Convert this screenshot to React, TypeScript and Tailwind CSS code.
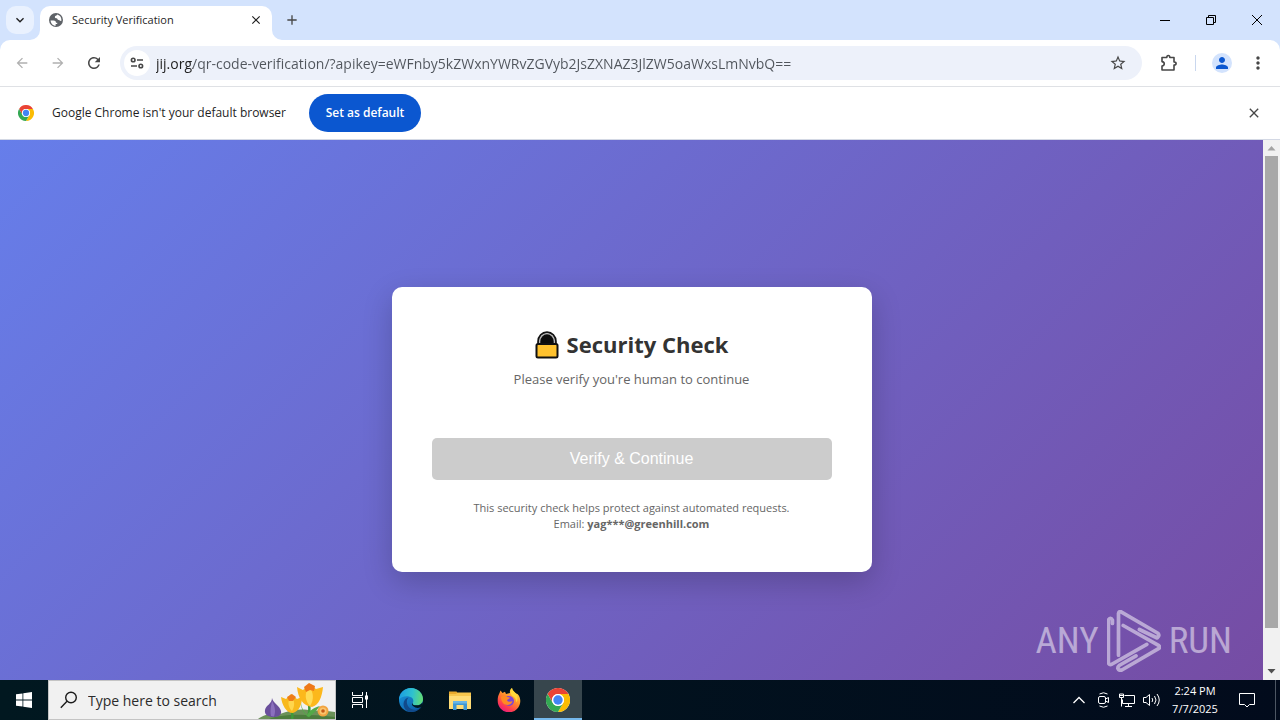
import React from 'react';
import {
  MdArrowBack,
  MdArrowForward,
  MdRefresh,
  MdClose,
  MdAdd,
  MdStarOutline,
  MdMoreVert,
  MdPerson,
  MdKeyboardArrowDown,
} from 'react-icons/md';

const ChromeLogo = ({ className }: { className?: string }) => (
  <svg viewBox="0 0 48 48" className={className} aria-hidden="true">
    <circle cx="24" cy="24" r="24" fill="#fff" />
    <path d="M3.2 12A24 24 0 0 1 44.8 12H24a12 12 0 0 0-10.4 18z" fill="#ea4335" />
    <path d="M44.8 12A24 24 0 0 1 24 48l10.4-18A12 12 0 0 0 24 12z" fill="#fbbc04" />
    <path d="M24 48A24 24 0 0 1 3.2 12l10.4 18A12 12 0 0 0 34.4 30z" fill="#34a853" />
    <circle cx="24" cy="24" r="12" fill="#fff" />
    <circle cx="24" cy="24" r="9.4" fill="#4285f4" />
  </svg>
);

const EdgeLogo = () => (
  <svg viewBox="0 0 24 24" className="h-6 w-6" aria-hidden="true">
    <defs>
      <linearGradient id="edgeTop" x1="0" y1="0.4" x2="1" y2="0.5">
        <stop offset="0" stopColor="#1b9de2" />
        <stop offset="0.55" stopColor="#2fc1cf" />
        <stop offset="1" stopColor="#63dc72" />
      </linearGradient>
      <linearGradient id="edgeSide" x1="0" y1="0" x2="0.8" y2="1">
        <stop offset="0" stopColor="#1b9de2" />
        <stop offset="1" stopColor="#0c59a4" />
      </linearGradient>
    </defs>
    <circle cx="12" cy="12" r="12" fill="url(#edgeSide)" />
    <path d="M0 12C0 5 5.500 0 12 0s12 5 12 11c0 4-3 6.300-6.500 6.300-3 0-4.500-1.200-3.700-2.400 1.300-1.800.6-5.900-4-6.500C5 7.800 1 9.500 0 12z" fill="url(#edgeTop)" />
    <path d="M9.500 9.500C6.500 12 7 20.500 15 21.800c3 .4 5.600-.8 7.500-3-2 3.200-6 5.200-10.500 5.200C5.500 24 3.500 17 5 13.500c.9-2.200 2.500-3.500 4.500-4z" fill="#114a8b" />
    <path d="M13.800 14.900c-.8 1.200.7 2.400 3.700 2.400 2.600 0 4.700-1 5.800-2.900.7 1.500.3 3.200-.8 4.400-2.500 1.700-6 1.400-8.500-.8-1.300-1.200-1.300-2.600-.2-3.100z" fill="#011820" />
  </svg>
);

const FolderIcon = () => (
  <svg viewBox="0 0 24 24" className="h-6 w-6" aria-hidden="true">
    <path d="M1 3.500h7.500l1.500 2h12v5H1z" fill="#e8a92c" />
    <path d="M1 6h22v15H1z" fill="#ffdc76" />
    <path d="M1 6h7l1.500-1.500H23V8H1z" fill="#f7c64d" />
    <path d="M5 13h14v9h-3.500v-5h-7v5H5z" fill="#3f97d3" />
    <path d="M5 13h14v2.500H5z" fill="#68b5e6" />
  </svg>
);

const FirefoxLogo = () => (
  <svg viewBox="0 0 24 24" className="h-6 w-6" aria-hidden="true">
    <defs>
      <linearGradient id="fox" x1="0.8" y1="0" x2="0.2" y2="1">
        <stop offset="0" stopColor="#ffe847" />
        <stop offset="0.45" stopColor="#ff8a2b" />
        <stop offset="0.75" stopColor="#ff3d4f" />
        <stop offset="1" stopColor="#e31587" />
      </linearGradient>
    </defs>
    <path d="M2.500 5l1-2.500L5.500 5 8 3.800 9 6l4-1c-.5-2 .3-4 2-5 .3 2.500 2.300 3.500 4 5.500l1.500.5c2 2 2.800 4.500 2.800 7A11.300 11.300 0 0 1 .7 13C.7 10 1 7.500 2.500 5z" fill="url(#fox)" />
    <circle cx="12" cy="13" r="5" fill="#7b45d8" />
    <path d="M4 9c2-2 4.500-1 6 0l3 .6c0 1.400-2.500 1.500-3 2.700.8 1.700 3.500 2 5.500.7-.5 4-6.500 5.500-9.500 2C4.500 13 4 11 4 9z" fill="#ff8b22" />
    <path d="M15 0c.3 2.500 2.300 3.500 4 5.500 2 2.500 2 6.500.5 9-.2-3.500-2-5.500-4-6.500C13 6.500 13.200 1.500 15 0z" fill="#ffd83a" />
  </svg>
);

const FlowerArt = () => (
  <svg viewBox="0 0 80 38" className="h-[38px] w-20 shrink-0" aria-hidden="true">
    <path d="M3 38c6-5 14-6 22-5 10-4 22-6 32-3 8-1 16 0 23 1v7z" fill="#6b9159" />
    <path d="M14 38c10-4 30-6 66-2v2z" fill="#4c7c3d" />
    <path d="M17 17c1 5 8 8 9 13s-4 6-8 6-9-2-8-7 7-6 7-12z" fill="#6a4f9c" />
    <path d="M17 20c-1 6-2 9-1 15l3 .5c2-5 1-10-2-15.500z" fill="#8b70bd" />
    <path d="M37 30c0 3 1 5 0 8M54 24c1 5 0 9-1 12" stroke="#3f9a3a" strokeWidth="2.500" fill="none" />
    <path d="M46 22c1 6 3 9 6 12 3-5 8-8 13-9-4 5-7 8-11 11-5-2-8-8-8-14z" fill="#54a948" />
    <path d="M26 16l5 2 5-5 6 5 5-2c0 8-3 14-9 16-7 0-11-8-12-16z" fill="#f8b91d" />
    <path d="M36 15c4 4 4 10 1 15-4-4-5-10-1-15z" fill="#ffd64d" />
    <path d="M32 16l5-3 4 3-3 4-4 0z" fill="#ee7d18" />
    <path d="M42 6l6 3 6-6 7 5 7-2c-1 10-4 18-11 20-9-1-14-9-15-20z" fill="#fcb81c" />
    <path d="M54 6c5 5 5 13 1 19-5-5-6-13-1-19z" fill="#ffdb55" />
    <path d="M49 6l5-4 6 3-1 5-4-1-4 2z" fill="#ee7818" />
    <circle cx="68" cy="30" r="5.500" fill="#f2a440" />
    <circle cx="68" cy="30" r="3.500" fill="#f9c56d" />
    <circle cx="68" cy="30" r="1.800" fill="#c55a16" />
  </svg>
);

const LockEmoji = () => (
  <svg viewBox="0 0 24 28" className="h-7 w-6" aria-hidden="true">
    <path d="M3 14v-3.500a9 9.500 0 0 1 18 0V14z" fill="#111" />
    <path d="M4.500 14v-3.500a7.500 8 0 0 1 15 0V14" fill="#0b0b0b" stroke="#b5b5b5" strokeWidth="1.600" />
    <path d="M3 14v-3.500a9 9.500 0 0 1 18 0V14" fill="none" stroke="#111" strokeWidth="1.600" />
    <rect x="1.500" y="13" width="21" height="13.500" rx="1.500" fill="#ffc22e" stroke="#111" strokeWidth="2" />
  </svg>
);

const Watermark = () => (
  <div className="absolute right-12 bottom-2 flex items-center gap-2 font-['Roboto_Condensed','Roboto',sans-serif] text-[37px] leading-[62px] text-white/50">
    <span>ANY</span>
    <svg viewBox="32 14 160 184" className="h-[62px] w-[54px]" fill="none" stroke="currentColor" strokeWidth="11" strokeLinecap="round" strokeLinejoin="round" aria-hidden="true">
      <path d="M66 148V24q2-8 9-4L183 83q6 7-2 14L128 72M80 60L186 120q4 4 0 8L76 192q-9 3-12-5 0-5 5-9L118 150M48 54V44q-5-10-12 0V170q2 8 10 5L150 116" />
    </svg>
    <span>RUN</span>
  </div>
);

const TitleBar = () => (
  <header className="flex h-10 shrink-0 items-end bg-[#d3e3fd] text-[#1f1f1f]">
    <button aria-label="Search tabs" className="mb-[6px] ml-[6px] flex h-7 w-7 items-center justify-center rounded-[10px] bg-[#e9f1fe]">
      <MdKeyboardArrowDown className="h-4 w-4" />
    </button>
    <div className="relative ml-[6px] flex h-[34px] w-[232px] items-center rounded-t-[10px] bg-white px-2 pb-[6px]">
      <svg viewBox="0 0 10 10" className="absolute bottom-0 -left-[10px] h-[10px] w-[10px]" aria-hidden="true">
        <path d="M10 0v10H0A10 10 0 0 0 10 0z" fill="#fff" />
      </svg>
      <svg viewBox="0 0 10 10" className="absolute -right-[10px] bottom-0 h-[10px] w-[10px]" aria-hidden="true">
        <path d="M0 0v10h10A10 10 0 0 1 0 0z" fill="#fff" />
      </svg>
      <svg viewBox="0 0 16 16" className="h-4 w-4 shrink-0 p-px" aria-hidden="true">
        <circle cx="8" cy="8" r="8" fill="#5f6368" />
        <path d="M1.800 8.500h3.400c1.600 0 2.800 1 2.800 2.600h1.400v1.600H7.600v1.800C4.600 14.500 2 12 1.800 8.500zM9.500 1.800c-.6 1.600-2.800 1-2.800 2.800 0 1.200 1 1.400 2 1.400s1 2 2.400 2 1 1.200 3 1c.6-3.400-1.400-6.200-4.600-7.200z" fill="#fff" />
      </svg>
      <span className="ml-2 flex-1 text-[11px]">Security Verification</span>
      <button aria-label="Close tab" className="flex h-4 w-4 items-center justify-center">
        <MdClose className="h-[14px] w-[14px]" stroke="currentColor" />
      </button>
    </div>
    <button aria-label="New tab" className="mb-[6px] ml-[6px] flex h-7 w-7 items-center justify-center text-[#474747]">
      <MdAdd className="h-4 w-4" />
    </button>
    <div className="ml-auto flex h-10 text-black">
      <button aria-label="Minimize" className="flex w-[46px] items-center justify-center">
        <svg viewBox="0 0 10 10" className="h-[10px] w-[10px]" stroke="currentColor"><path d="M0 5.500h10" /></svg>
      </button>
      <button aria-label="Restore" className="flex w-[46px] items-center justify-center">
        <svg viewBox="0 0 10 10" className="h-[10px] w-[10px]" fill="none" stroke="currentColor"><path d="M.5 2.500h7v7h-7zM2.500 2.500v-2h7v7h-2" /></svg>
      </button>
      <button aria-label="Close" className="flex w-[46px] items-center justify-center">
        <svg viewBox="0 0 10 10" className="h-[10px] w-[10px]" stroke="currentColor"><path d="M0 0l10 10M10 0L0 10" /></svg>
      </button>
    </div>
  </header>
);

const Toolbar = () => (
  <div className="shrink-0 bg-[#d3e3fd]">
    <div className="flex h-[47px] items-center rounded-t-[10px] border-b border-[#dfe1e5] bg-white px-1 text-[#474747]">
      <button aria-label="Back" className="flex h-9 w-9 items-center justify-center text-[#b0b0b0]"><MdArrowBack className="h-4 w-4" /></button>
      <button aria-label="Forward" className="flex h-9 w-9 items-center justify-center text-[#b0b0b0]"><MdArrowForward className="h-4 w-4" /></button>
      <button aria-label="Reload" className="flex h-9 w-9 items-center justify-center"><MdRefresh className="h-[18px] w-[18px]" /></button>
      <div className="ml-2 flex h-[34px] flex-1 items-center rounded-full bg-[#edf1fa] pr-3 pl-1">
        <button aria-label="View site information" className="flex h-[26px] w-[26px] items-center justify-center rounded-full bg-white">
          <svg viewBox="0 0 14 12" className="h-3 w-[14px]" fill="none" stroke="currentColor" strokeWidth="1.600">
            <circle cx="3.200" cy="3" r="1.800" />
            <path d="M7 3h6M1 9h6" />
            <circle cx="10.800" cy="9" r="1.800" />
          </svg>
        </button>
        <input
          aria-label="Address"
          readOnly
          value="jij.org/qr-code-verification/?apikey=eWFnby5kZWxnYWRvZGVyb2JsZXNAZ3JlZW5oaWxsLmNvbQ=="
          className="ml-[6px] min-w-0 flex-1 bg-[linear-gradient(90deg,#1f1f1f_37px,#50555c_37px)] bg-clip-text text-[14px] text-transparent outline-none"
        />
        <button aria-label="Bookmark this tab" className="flex h-6 w-6 items-center justify-center"><MdStarOutline className="h-[18px] w-[18px]" /></button>
      </div>
      <button aria-label="Extensions" className="ml-[9px] flex h-9 w-9 items-center justify-center">
        <svg viewBox="0 0 18 18" className="h-[18px] w-[18px]" fill="none" stroke="currentColor" strokeWidth="1.600" strokeLinejoin="round">
          <path d="M2 3.500h4.800c0-2.600 3-2.600 3 0H14V8c2.800 0 2.800 3 0 3v5H2v-4c3-.4 3-4 0-4.400z" />
        </svg>
      </button>
      <div className="mx-2 h-4 w-px bg-[#c9d7ee]" />
      <button aria-label="You" className="flex h-9 w-9 items-center justify-center">
        <span className="flex h-5 w-5 items-center justify-center rounded-full bg-[#d3e3fd] text-[#0b57d0]"><MdPerson className="h-[18px] w-[18px]" /></span>
      </button>
      <button aria-label="Customize and control" className="flex h-9 w-9 items-center justify-center"><MdMoreVert className="h-5 w-5" /></button>
    </div>
  </div>
);

const DefaultBrowserBar = () => (
  <div className="flex h-[53px] shrink-0 items-center border-b border-[#d3d8e4] bg-white pr-4 pl-[18px] text-[12px] text-[#1f1f1f]">
    <ChromeLogo className="h-4 w-4" />
    <span className="ml-[18px] w-[241px] whitespace-nowrap">Google Chrome isn't your default browser</span>
    <button className="ml-4 h-[38px] w-28 rounded-full bg-[#0b57d0] font-semibold text-white">Set as default</button>
    <button aria-label="Dismiss" className="ml-auto flex h-5 w-5 items-center justify-center text-[#474747]"><MdClose className="h-4 w-4" /></button>
  </div>
);

const SecurityCard = () => (
  <section className="w-[480px] rounded-[10px] bg-white p-10 text-center text-[#666] shadow-[0_10px_30px_rgba(0,0,0,0.2)]">
    <h1 className="flex h-9 items-center justify-center gap-2 text-[22px] font-bold text-[#333]">
      <LockEmoji />
      Security Check
    </h1>
    <p className="mt-1 text-[13px] leading-6">Please verify you're human to continue</p>
    <button disabled className="mt-[47px] h-[42px] w-full rounded-[5px] bg-[#ccc] font-['Liberation_Sans',Arial,sans-serif] text-[16px] text-white">
      Verify &amp; Continue
    </button>
    <p className="mt-5 text-[11px] leading-4">
      This security check helps protect against automated requests.
      <br />
      Email: <strong>yag***@greenhill.com</strong>
    </p>
  </section>
);

const Scrollbar = () => (
  <div className="flex w-[17px] shrink-0 flex-col items-center bg-[#f1f1f1]" aria-hidden="true">
    <svg viewBox="0 0 17 16" className="h-4 w-[17px] shrink-0"><path d="M4.500 10.500h8l-4-4.500z" fill="#a3a3a3" /></svg>
    <div className="min-h-0 w-[13px] flex-1"><div className="h-[93%] bg-[#a8a8a8]" /></div>
    <svg viewBox="0 0 17 16" className="h-4 w-[17px] shrink-0"><path d="M4.500 5h8l-4 4.500z" fill="#505050" /></svg>
  </div>
);

const Taskbar = () => (
  <footer className="flex h-10 shrink-0 bg-[linear-gradient(90deg,#011820,#020b1c)] text-white">
    <button aria-label="Start" className="flex w-12 items-center justify-center">
      <svg viewBox="0 0 16 16" className="h-4 w-4" fill="#fff"><path d="M0 2.300l6.500-.9v6.200H0zM7.300 1.300L16 0v7.600H7.300zM0 8.400h6.500v6.200L0 13.700zM7.300 8.400H16V16l-8.700-1.300z" /></svg>
    </button>
    <label className="flex w-72 items-end border border-[#c4c4c4] bg-[#f1f1f1]">
      <svg viewBox="0 0 18 18" className="ml-[11px] h-[18px] w-[18px] shrink-0 self-center" fill="none" stroke="#1b1b1b" strokeWidth="1.400">
        <circle cx="11" cy="6.500" r="5.300" />
        <path d="M7 10.300L.8 16.800" />
      </svg>
      <input
        type="text"
        aria-label="Search"
        placeholder="Type here to search"
        className="ml-[10px] min-w-0 flex-1 self-center bg-transparent text-[14px] outline-none placeholder:text-[#2b2b2b]"
      />
      <FlowerArt />
    </label>
    <button aria-label="Task View" className="flex w-12 items-center justify-center">
      <svg viewBox="0 0 16 16" className="h-4 w-4" fill="none" stroke="#fff">
        <path d="M.5 0v3.500h10V0M.5 16v-3.500h10V16M.5 5.500h10v5H.5zM14.500 0v16" />
        <path d="M13 3.500h3v4h-3z" fill="#fff" stroke="none" />
      </svg>
    </button>
    <nav className="ml-[3px] flex gap-px" aria-label="Pinned apps">
      <button aria-label="Microsoft Edge" className="flex w-12 items-center justify-center"><EdgeLogo /></button>
      <button aria-label="File Explorer" className="flex w-12 items-center justify-center"><FolderIcon /></button>
      <button aria-label="Firefox" className="flex w-12 items-center justify-center"><FirefoxLogo /></button>
      <button aria-label="Google Chrome" className="flex w-12 items-center justify-center bg-[#37464d] shadow-[inset_0_-2px_0_#76b9ed]"><ChromeLogo className="h-6 w-6" /></button>
    </nav>
    <div className="ml-auto flex">
      <button aria-label="Show hidden icons" className="flex w-6 items-center justify-center">
        <svg viewBox="0 0 12 8" className="h-2 w-3" fill="none" stroke="#fff" strokeWidth="1.300"><path d="M.5 7L6 1.500 11.500 7" /></svg>
      </button>
      <button aria-label="Meet Now" className="flex w-6 items-center justify-center">
        <svg viewBox="0 0 16 16" className="h-4 w-4" fill="none" stroke="#fff"><rect x="3.500" y="4.500" width="7" height="7" rx="1.500" /><path d="M10.500 7l3-1.500v5l-3-1.500M4.500 2q4-2.500 8 0M4.500 14q4 2.500 8 0" /></svg>
      </button>
      <button aria-label="Network" className="flex w-6 items-center justify-center">
        <svg viewBox="0 0 16 14" className="h-[14px] w-4" fill="none" stroke="#fff"><path d="M5.500 2.500h10v8h-12v-4M9.500 10.500v3M6 13.500h7M.5 1v3.500h4V1zM.5 2.500h4M2.500 4.500v9" /></svg>
      </button>
      <button aria-label="Volume" className="flex w-6 items-center justify-center">
        <svg viewBox="0 0 17 14" className="h-[14px] w-[17px]" fill="none" stroke="#fff"><path d="M.5 4.500h2.500l3.500-3v11l-3.500-3H.5zM9 5q1.500 2 0 4M11.500 3q3 4 0 8M14 1q4.500 6 0 12" /></svg>
      </button>
      <time className="flex w-16 flex-col justify-center text-center text-[11px] leading-[18px]">
        <span>2:24 PM</span>
        <span>7/7/2025</span>
      </time>
      <button aria-label="Notifications" className="mr-2 flex w-10 items-center justify-center">
        <svg viewBox="0 0 16 16" className="h-4 w-4" fill="none" stroke="#fff"><path d="M.5 1.500h15v11h-5L8 15l-2.500-2.500h-5z" /></svg>
      </button>
      <button aria-label="Show desktop" className="w-[5px] border-l border-[#4d5663]" />
    </div>
  </footer>
);

const App: React.FC = () => {
  return (
    <div className="flex h-screen flex-col overflow-hidden font-['Open_Sans','Noto_Sans',sans-serif]">
      <TitleBar />
      <Toolbar />
      <DefaultBrowserBar />
      <div className="relative flex min-h-0 flex-1">
        <main className="h-full min-w-0 flex-1 overflow-hidden">
          <div className="flex h-[calc(100%+38px)] items-center justify-center bg-[linear-gradient(135deg,#667eea_0%,#764ba2_100%)]">
            <SecurityCard />
          </div>
        </main>
        <Scrollbar />
        <Watermark />
      </div>
      <Taskbar />
    </div>
  );
};

export default App;
